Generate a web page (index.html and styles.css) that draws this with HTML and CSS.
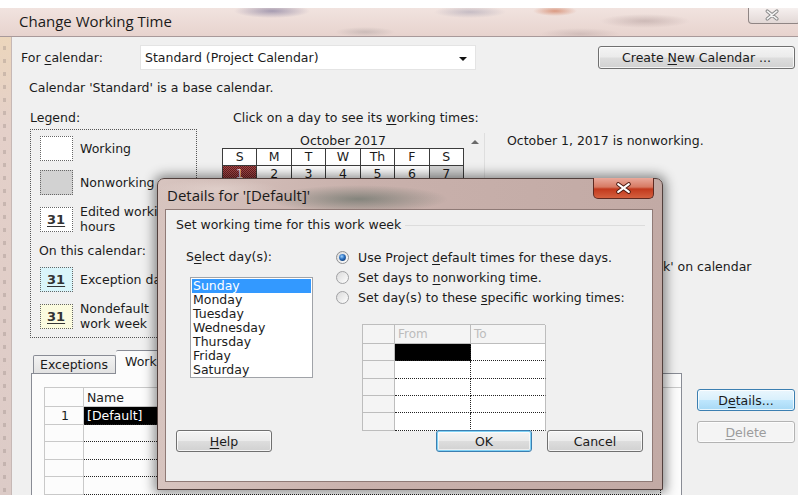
FILE: index.html
```html
<!DOCTYPE html>
<html lang="en">
<head>
<meta charset="utf-8">
<title>Change Working Time</title>
<link rel="stylesheet" href="styles.css">
</head>
<body>
<div class="screen">
  <div class="win">
    <div class="win-title">
      <span class="win-title-text">Change Working Time</span>
      <span class="win-close">
        <svg width="52" height="16" viewBox="0 0 52 16">
          <path d="M19 3 L29 11 M29 3 L19 11" stroke="#8a8a8a" stroke-width="3.6" stroke-linecap="round"/>
          <path d="M19 3 L29 11 M29 3 L19 11" stroke="#f4f4f4" stroke-width="1.6" stroke-linecap="round"/>
        </svg>
      </span>
    </div>
    <div class="win-body">
      <div class="win-edge"></div>
      <div class="client">
        <div class="row-calendar">
          <span class="lbl-for">For <u>c</u>alendar:</span>
          <div class="combo"><span>Standard (Project Calendar)</span><span class="combo-arrow"></span></div>
          <button class="btn btn-create">Create <u>N</u>ew Calendar ...</button>
        </div>
        <p class="base-note">Calendar 'Standard' is a base calendar.</p>

        <div class="middle">
          <div class="legend">
            <div class="legend-title">Legend:</div>
            <div class="legend-box">
              <div class="legend-item"><span class="sw"></span><span class="sw-label">Working</span></div>
              <div class="legend-item"><span class="sw sw-non"></span><span class="sw-label">Nonworking</span></div>
              <div class="legend-item"><span class="sw"><u>31</u></span><span class="sw-label">Edited working hours</span></div>
              <div class="legend-sub">On this calendar:</div>
              <div class="legend-item"><span class="sw sw-exc"><u>31</u></span><span class="sw-label">Exception days</span></div>
              <div class="legend-item"><span class="sw sw-nd"><u>31</u></span><span class="sw-label">Nondefault work week</span></div>
            </div>
          </div>

          <div class="cal">
            <div class="cal-hint">Click on a day to see its <u>w</u>orking times:</div>
            <div class="cal-body">
              <div class="cal-month">
                <div class="cal-title">October 2017</div>
                <div class="cal-grid">
                  <span class="hd">S</span><span class="hd">M</span><span class="hd">T</span><span class="hd">W</span><span class="hd">Th</span><span class="hd">F</span><span class="hd">S</span>
                  <span class="day sel">1</span><span class="day">2</span><span class="day">3</span><span class="day">4</span><span class="day">5</span><span class="day">6</span><span class="day off">7</span>
                </div>
              </div>
              <div class="cal-scroll"><span class="up-arrow"></span></div>
            </div>
          </div>

          <div class="info">
            <div class="info-date">October 1, 2017 is nonworking.</div>
            <div class="info-src">Default 'work week' on calendar</div>
          </div>
        </div>

        <div class="bottom">
          <div class="tabs">
            <div class="tab-strip">
              <span class="tab">Exceptions</span>
              <span class="tab active">Work Weeks</span>
            </div>
            <div class="tab-panel">
              <div class="ww-grid">
                <span class="rh"></span><span class="ch">Name</span>
                <span class="rh">1</span><span class="dc picked">[Default]</span>
                <span class="rh"></span><span class="dc"></span>
                <span class="rh"></span><span class="dc"></span>
                <span class="rh"></span><span class="dc"></span>
                <span class="rh"></span><span class="dc"></span>
              </div>
            </div>
          </div>
          <div class="side-buttons">
            <button class="btn btn-hot">D<u>e</u>tails...</button>
            <button class="btn btn-off"><u>D</u>elete</button>
          </div>
        </div>
      </div>
    </div>
  </div>

  <div class="dlg">
    <div class="dlg-title">
      <span class="dlg-title-text">Details for '[Default]'</span>
      <span class="dlg-close">
        <svg width="61" height="21" viewBox="0 0 61 21">
          <path d="M25 6 L36 14 M36 6 L25 14" stroke="#4b1910" stroke-width="4.2" stroke-linecap="round"/>
          <path d="M25 6 L36 14 M36 6 L25 14" stroke="#ffffff" stroke-width="2.2" stroke-linecap="round"/>
        </svg>
      </span>
    </div>
    <div class="dlg-client">
      <div class="group-head"><span>Set working time for this work week</span><span class="group-line"></span></div>
      <div class="group-body">
        <div class="days">
          <div>S<u>e</u>lect day(s):</div>
          <ul class="day-list">
            <li class="on">Sunday</li>
            <li>Monday</li>
            <li>Tuesday</li>
            <li>Wednesday</li>
            <li>Thursday</li>
            <li>Friday</li>
            <li>Saturday</li>
          </ul>
        </div>
        <div class="choices">
          <div class="radio">
            <svg width="13" height="13" viewBox="0 0 13 13">
              <defs>
                <radialGradient id="dot" cx="0.4" cy="0.35" r="0.7">
                  <stop offset="0" stop-color="#9fd3ff"/>
                  <stop offset="0.55" stop-color="#2a6fbf"/>
                  <stop offset="1" stop-color="#123e7a"/>
                </radialGradient>
                <linearGradient id="well" x1="0" y1="0" x2="1" y2="1">
                  <stop offset="0" stop-color="#d9d9d9"/>
                  <stop offset="1" stop-color="#ffffff"/>
                </linearGradient>
              </defs>
              <circle cx="6.5" cy="6.5" r="6" fill="url(#well)" stroke="#8f9092"/>
              <circle cx="6.5" cy="6.5" r="3.4" fill="url(#dot)"/>
            </svg>
            <span>Use Project <u>d</u>efault times for these days.</span>
          </div>
          <div class="radio">
            <svg width="13" height="13" viewBox="0 0 13 13"><circle cx="6.5" cy="6.5" r="6" fill="url(#well)" stroke="#a0a1a3"/></svg>
            <span>Set days to <u>n</u>onworking time.</span>
          </div>
          <div class="radio">
            <svg width="13" height="13" viewBox="0 0 13 13"><circle cx="6.5" cy="6.5" r="6" fill="url(#well)" stroke="#a0a1a3"/></svg>
            <span>Set day(s) to these <u>s</u>pecific working times:</span>
          </div>
          <div class="time-grid">
            <span class="rh"></span><span class="ch dim">From</span><span class="ch dim">To</span>
            <span class="rh"></span><span class="tc black"></span><span class="tc"></span>
            <span class="rh"></span><span class="tc"></span><span class="tc"></span>
            <span class="rh"></span><span class="tc"></span><span class="tc"></span>
            <span class="rh"></span><span class="tc"></span><span class="tc"></span>
            <span class="rh"></span><span class="tc"></span><span class="tc"></span>
          </div>
        </div>
      </div>
      <div class="dlg-buttons">
        <button class="btn"><u>H</u>elp</button>
        <span class="spacer"></span>
        <button class="btn btn-default">OK</button>
        <button class="btn">Cancel</button>
      </div>
    </div>
  </div>
</div>
</body>
</html>
```

FILE: styles.css
```css
* { box-sizing: border-box; }

html, body { margin: 0; padding: 0; }

body {
  width: 798px;
  height: 495px;
  overflow: hidden;
  background: #ffffff;
  font-family: "DejaVu Sans", Verdana, sans-serif;
  font-size: 12.5px;
  color: #1b1b1b;
}

u { text-decoration: underline; text-underline-offset: 2px; }

.screen {
  position: relative;
  width: 798px;
  height: 495px;
  overflow: hidden;
  padding-top: 8px;
  background: #ffffff;
}

/* ---------- main window ---------- */
.win { height: 487px; display: flex; flex-direction: column; }

.win-title {
  height: 29px;
  flex: none;
  display: flex;
  justify-content: space-between;
  align-items: flex-start;
  border-bottom: 1px solid #a8999a;
  background:
    radial-gradient(ellipse 38px 7px at 272px 3px, rgba(105, 98, 140, 0.55), transparent),
    radial-gradient(ellipse 30px 5px at 365px 24px, rgba(150, 140, 140, 0.35), transparent),
    radial-gradient(ellipse 36px 6px at 470px 4px, rgba(120, 120, 150, 0.35), transparent),
    radial-gradient(ellipse 22px 5px at 555px 3px, rgba(200, 95, 55, 0.55), transparent),
    radial-gradient(ellipse 45px 7px at 645px 13px, rgba(140, 115, 115, 0.32), transparent),
    radial-gradient(ellipse 40px 6px at 580px 26px, rgba(150, 130, 130, 0.28), transparent),
    linear-gradient(#f1e3df, #e7d3ce);
}

.win-title-text {
  font-family: "Open Sans", "Noto Sans", sans-serif;
  font-size: 15px;
  line-height: 26px;
  padding-left: 19px;
  color: #1a1a1a;
}

.win-close {
  width: 52px;
  height: 16px;
  margin-right: -2px;
  border: 1px solid #8f8584;
  border-top: none;
  border-radius: 0 0 4px 4px;
  background: linear-gradient(#f6f0ef, #e2d8d6);
  display: flex;
}

.win-body { flex: 1; display: flex; min-height: 0; }

.win-edge {
  width: 11px;
  flex: none;
  background:
    repeating-linear-gradient(180deg, transparent 0 9px, rgba(150, 135, 130, 0.35) 9px 13px) 3px 0 / 3px 100% no-repeat,
    linear-gradient(180deg, #ecd6bc 0, #e4d0c9 90px, #dccbc7 100%);
}

.client {
  flex: 1;
  background: #f0f0f0;
  border-left: 1px solid #c6b8b5;
  padding: 8px 3px 0 9px;
  display: flex;
  flex-direction: column;
}

.row-calendar { display: flex; align-items: center; height: 25px; }

.lbl-for { width: 119px; }

.combo {
  width: 336px;
  height: 25px;
  background: #ffffff;
  border: 1px solid #e4e4e4;
  display: flex;
  align-items: center;
  justify-content: space-between;
  padding: 0 8px 0 4px;
}

.combo-arrow {
  width: 0;
  height: 0;
  border-left: 4px solid transparent;
  border-right: 4px solid transparent;
  border-top: 4px solid #111;
  margin-top: 2px;
}

.btn {
  font-family: inherit;
  font-size: 12.5px;
  color: #1b1b1b;
  height: 22px;
  padding: 0;
  border: 1px solid #707070;
  border-radius: 3px;
  background: linear-gradient(#f4f4f4 0, #ebebeb 48%, #dddddd 52%, #d1d1d1 100%);
  box-shadow: inset 0 0 0 1px rgba(255, 255, 255, 0.75);
}

.btn-create { width: 197px; height: 23px; margin-left: auto; }

.base-note { margin: 10px 0 0 8px; line-height: 16px; }

/* ---------- legend / calendar / info ---------- */
.middle { display: flex; height: 228px; margin-top: 14px; flex: none; }

.legend { width: 167px; margin-left: 9px; flex: none; }

.legend-title { line-height: 16px; }

.legend-box {
  margin-top: 3px;
  height: 209px;
  border: 1px dotted #555;
  padding: 6px 0 0 9px;
}

.legend-item { display: flex; align-items: center; gap: 7px; margin-bottom: 9px; }

.sw {
  width: 33px;
  height: 25px;
  flex: none;
  border: 1px dotted #666;
  background: #ffffff;
  display: flex;
  align-items: center;
  padding-left: 6px;
  font-weight: bold;
  font-size: 13px;
  color: #333;
}

.sw-non { background: #d2d2d2; }
.sw-exc { background: #d9f5fa; }
.sw-nd { background: #fbfbdf; }

.sw-label { line-height: 15px; width: 100px; }

.legend-sub { margin: 1px 0 8px -1px; line-height: 16px; }

.cal { width: 263px; margin-left: 25px; flex: none; }

.cal-hint { padding-left: 11px; line-height: 16px; }

.cal-body { display: flex; margin-top: 7px; }

.cal-month { width: 242px; }

.cal-title { text-align: center; line-height: 15px; }

.cal-grid {
  display: grid;
  grid-template-columns: repeat(7, 1fr);
  grid-template-rows: 17px 18px;
  border-top: 1px solid #3c3c3c;
  border-left: 1px solid #3c3c3c;
}

.cal-grid span {
  border-right: 1px solid #3c3c3c;
  border-bottom: 1px solid #3c3c3c;
  text-align: center;
  line-height: 16px;
  background: #ffffff;
}

.cal-grid .off { background: #d4d4d4; }

.cal-grid .sel {
  color: #f4dada;
  background: repeating-conic-gradient(#6e1e1e 0 25%, #a34d4d 0 50%) 0 0 / 2px 2px;
}

.cal-scroll {
  width: 21px;
  height: 60px;
  border-right: 1px solid #dedede;
  display: flex;
  justify-content: center;
  padding: 7px 0 0 2px;
}

.up-arrow {
  width: 0;
  height: 0;
  border-left: 4px solid transparent;
  border-right: 4px solid transparent;
  border-bottom: 4px solid #6a6a6a;
}

.info { margin-left: 22px; flex: 1; }

.info-date { margin-top: 23px; line-height: 16px; }

.info-src { margin-top: 110px; padding-left: 43px; line-height: 16px; }

/* ---------- tabs ---------- */
.bottom { display: flex; margin: 12px 0 0 10px; flex: 1; min-height: 0; }

.tabs { width: 651px; flex: none; display: flex; flex-direction: column; }

.tab-strip { height: 23px; display: flex; align-items: flex-end; padding-left: 2px; flex: none; }

.tab {
  height: 18px;
  width: 83px;
  border: 1px solid #898c95;
  border-bottom: none;
  border-radius: 2px 2px 0 0;
  background: linear-gradient(#f3f3f3, #e2e2e2);
  line-height: 17px;
  padding-left: 6px;
}

.tab.active {
  height: 24px;
  width: 100px;
  margin-bottom: -1px;
  background: #fcfcfc;
  border-left: none;
  padding-left: 9px;
  line-height: 22px;
  position: relative;
}

.tab-panel {
  flex: 1;
  border: 1px solid #898c95;
  background: #fcfcfc;
  padding: 13px 0 0 12px;
}

.ww-grid {
  display: grid;
  grid-template-columns: 39px 577px;
  grid-template-rows: 19px repeat(5, 17.5px);
  border-top: 1px solid #c9c9c9;
  border-left: 1px solid #c9c9c9;
}

.ww-grid span { line-height: 17px; }

.ww-grid .rh {
  border-right: 1px solid #c9c9c9;
  border-bottom: 1px solid #c9c9c9;
  text-align: center;
  padding-left: 2px;
}

.ww-grid .ch {
  border-right: 1px solid #c9c9c9;
  border-bottom: 1px solid #c9c9c9;
  padding-left: 3px;
  line-height: 20px;
}

.ww-grid .dc {
  border-bottom: 1px dotted #222;
  border-right: 1px dotted #222;
  padding-left: 3px;
}

.ww-grid .picked { background: #000; color: #fff; }

.side-buttons {
  width: 98px;
  margin-left: 15px;
  padding-top: 39px;
  display: flex;
  flex-direction: column;
  gap: 10px;
}

.side-buttons .btn { height: 22px; width: 98px; }

.btn-hot {
  border-color: #3c7fb1;
  background: linear-gradient(#eaf6fd 0, #d9f0fc 48%, #bee6fd 52%, #a7d9f5 100%);
}

.btn-off {
  color: #9c9c9c;
  border-color: #b3b3b3;
  background: #f4f4f4;
}

/* ---------- details dialog ---------- */
.dlg {
  position: absolute;
  left: 157px;
  top: 178px;
  width: 506px;
  height: 312px;
  border: 1px solid #52403d;
  border-radius: 7px 7px 0 0;
  padding: 0 9px 7px 7px;
  display: flex;
  flex-direction: column;
  box-shadow: 0 0 12px 3px rgba(0, 0, 0, 0.45);
  background:
    radial-gradient(ellipse 90px 14px at 200px 20px, rgba(75, 95, 85, 0.55), transparent),
    radial-gradient(ellipse 60px 10px at 60px 10px, rgba(230, 215, 210, 0.6), transparent),
    linear-gradient(90deg, #d7c4bf 0, #c9b1ac 40%, #c2aaa5 100%);
}

.dlg-title { height: 30px; flex: none; display: flex; justify-content: space-between; align-items: flex-start; }

.dlg-title-text {
  font-family: "Open Sans", "Noto Sans", sans-serif;
  font-size: 15px;
  line-height: 30px;
  padding: 1px 0 0 2px;
  color: #1a1a1a;
}

.dlg-close {
  width: 61px;
  height: 21px;
  margin: -1px -1px 0 0;
  border: 1px solid #5e2a22;
  border-top: none;
  border-radius: 0 0 5px 5px;
  background: linear-gradient(#e9a99b 0, #d77a63 45%, #c2391d 55%, #d4603f 100%);
  display: flex;
}

.dlg-client {
  flex: 1;
  background: #f0f0f0;
  border: 1px solid #8f7a76;
  padding: 7px 7px 0 10px;
  display: flex;
  flex-direction: column;
}

.group-head { display: flex; align-items: center; line-height: 16px; }

.group-line { flex: 1; margin-left: 4px; border-top: 1px solid #dcdcdc; }

.group-body { display: flex; margin-top: 16px; padding-left: 10px; height: 181px; }

.days { width: 150px; flex: none; line-height: 16px; }

.day-list {
  list-style: none;
  margin: 12px 0 0 4px;
  padding: 1px;
  width: 123px;
  height: 101px;
  background: #ffffff;
  border: 1px solid #a0a3a8;
  line-height: 14px;
}

.day-list li { padding-left: 1px; }

.day-list .on { background: #3399ff; color: #ffffff; }

.choices { margin-top: -2px; }

.radio { display: flex; align-items: center; gap: 9px; height: 20px; }

.radio svg { flex: none; }

.time-grid {
  margin: 17px 0 0 26px;
  width: 183px;
  display: grid;
  grid-template-columns: 32px 76px 75px;
  grid-template-rows: 19px 17px 18px 17px 17px 18px;
  border-top: 1px solid #bdbdbd;
  border-left: 1px solid #bdbdbd;
}

.time-grid .rh {
  border-right: 1px solid #bdbdbd;
  border-bottom: 1px solid #bdbdbd;
  background: #f4f4f4;
}

.time-grid .ch {
  border-right: 1px solid #bdbdbd;
  border-bottom: 1px solid #bdbdbd;
  background: #f4f4f4;
  padding-left: 3px;
  line-height: 18px;
  font-size: 12px;
}

.time-grid .dim { color: #bcbcbc; }

.time-grid .tc {
  background: #ffffff;
  border-bottom: 1px dotted #222;
  border-right: 1px dotted #222;
}

.time-grid .tc:nth-child(3n) { border-right: 1px solid #bdbdbd; }

.time-grid .black { background: #000; }

.dlg-buttons { display: flex; gap: 15px; margin-top: 0; padding-right: 2px; }

.dlg-buttons .btn { width: 96px; height: 22px; }

.dlg-buttons .spacer { flex: 1; }

.btn-default {
  border-color: #3c7fb1;
  box-shadow: inset 0 0 0 1px #7fd1f5, inset 0 0 0 2px rgba(255, 255, 255, 0.6);
}
```
